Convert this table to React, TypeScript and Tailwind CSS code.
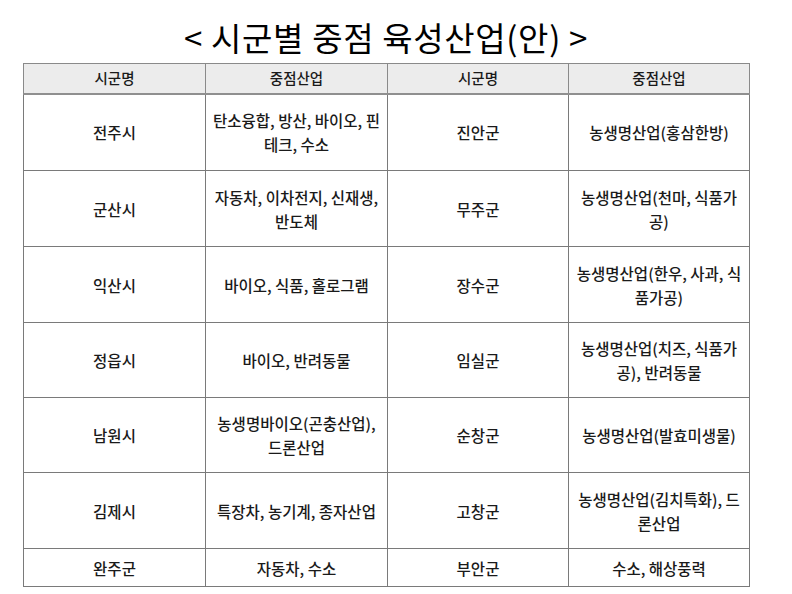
import React from "react";

const rows: [string, string, string, string][] = [
  ["전주시", "탄소융합, 방산, 바이오, 핀테크, 수소", "진안군", "농생명산업(홍삼한방)"],
  ["군산시", "자동차, 이차전지, 신재생, 반도체", "무주군", "농생명산업(천마, 식품가공)"],
  ["익산시", "바이오, 식품, 홀로그램", "장수군", "농생명산업(한우, 사과, 식품가공)"],
  ["정읍시", "바이오, 반려동물", "임실군", "농생명산업(치즈, 식품가공), 반려동물"],
  ["남원시", "농생명바이오(곤충산업), 드론산업", "순창군", "농생명산업(발효미생물)"],
  ["김제시", "특장차, 농기계, 종자산업", "고창군", "농생명산업(김치특화), 드론산업"],
  ["완주군", "자동차, 수소", "부안군", "수소, 해상풍력"],
];

const heights = ["h-[77px]", "h-[76px]", "h-[76px]", "h-[75px]", "h-[75px]", "h-[76px]", "h-[38px]"];

export default function App() {
  return (
    <div
      className="w-[792px] h-[594px] bg-white text-[#1a1a1a]"
      style={{ fontFamily: '"Noto Sans CJK KR", "Noto Sans", sans-serif' }}
    >
      <div className="ml-[23px] w-[726px] flex justify-center pt-[17px] h-[63px]">
        <h1 className="text-[33px] leading-[40px] font-normal text-black whitespace-nowrap tracking-[0.02em]">
          &lt; 시군별 중점 육성산업(안) &gt;
        </h1>
      </div>
      <table className="ml-[23px] w-[726px] table-fixed border-collapse text-[15.5px] leading-[24px] font-medium">
        <colgroup>
          <col className="w-[182px]" />
          <col className="w-[182px]" />
          <col className="w-[181px]" />
          <col className="w-[181px]" />
        </colgroup>
        <thead>
          <tr className="h-[30px] bg-[#ececec]">
            {["시군명", "중점산업", "시군명", "중점산업"].map((h, i) => (
              <th
                key={i}
                className="border border-[#8a8a8a] border-b-2 border-b-[#8f8f8f] font-medium text-[14.5px] p-0 text-center align-middle"
              >
                {h}
              </th>
            ))}
          </tr>
        </thead>
        <tbody>
          {rows.map((r, i) => (
            <tr key={i} className={heights[i]}>
              {r.map((c, j) => (
                <td
                  key={j}
                  className="border border-[#7a7a7a] px-[5px] py-0 text-center align-middle"
                >
                  {c}
                </td>
              ))}
            </tr>
          ))}
        </tbody>
      </table>
    </div>
  );
}
